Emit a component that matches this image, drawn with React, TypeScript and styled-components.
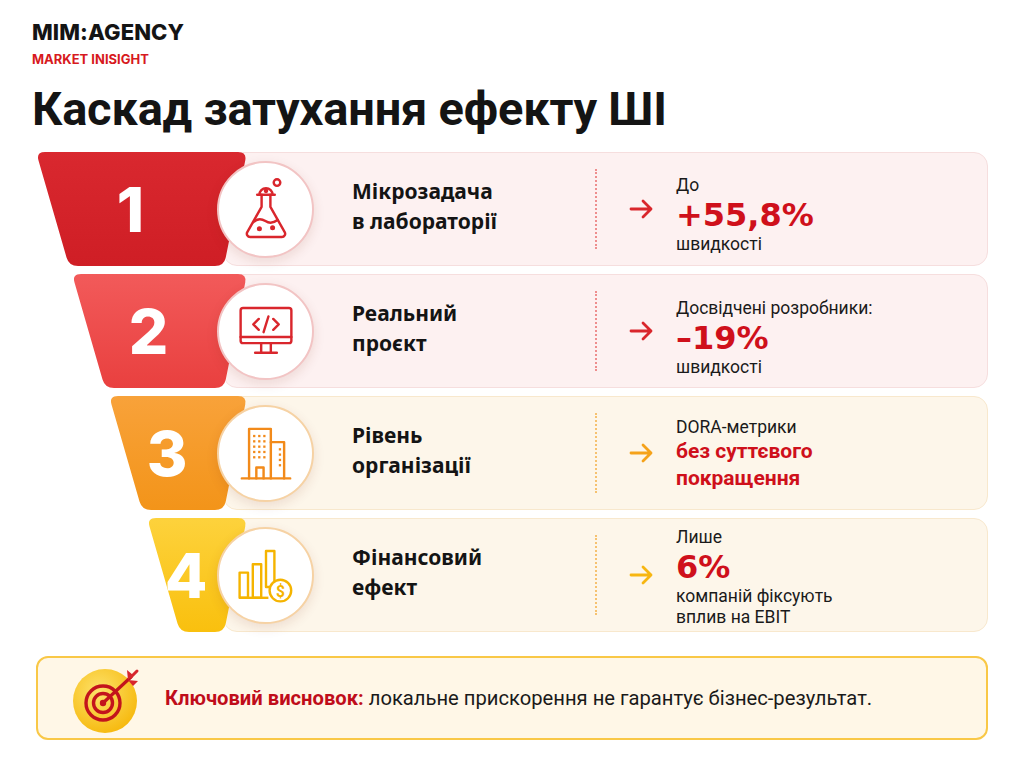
import React from "react";
import styled, { createGlobalStyle } from "styled-components";

const GlobalStyle = createGlobalStyle`
  body {
    margin: 0;
    background: #ffffff;
    font-family: "Noto Sans", "Open Sans", sans-serif;
    color: #151515;
  }
`;

const RED = "#cf101b";

type Tone = "red" | "orange";

const tones = {
  red: { card: "#fdf1f1", border: "#f6dede", ring: "#f2c4c4", dots: "#ee8e8e" },
  orange: { card: "#fdf6ea", border: "#f8e8cd", ring: "#f6d2a4", dots: "#f6c270" },
};

const Page = styled.div`
  width: 1024px;
  height: 768px;
  box-sizing: border-box;
  padding: 18px 36px 0 32px;
  display: flex;
  flex-direction: column;
`;

const Brand = styled.div`
  font-family: Inter, Roboto, sans-serif;
  font-weight: 800;
  font-size: 22px;
  line-height: 28px;
  letter-spacing: 0.1px;
  color: #141414;
`;

const Tagline = styled.div`
  font-family: Inter, Roboto, sans-serif;
  font-weight: 700;
  font-size: 13px;
  line-height: 16px;
  margin-top: 5px;
  color: #d71920;
`;

const Title = styled.h1`
  margin: 14px 0 0;
  font-family: Roboto, "Liberation Sans", sans-serif;
  font-weight: 700;
  font-size: 47px;
  line-height: 56px;
  letter-spacing: -0.2px;
  color: #141414;
`;

const Rows = styled.div`
  margin: 15px 0 0 4px;
  display: flex;
  flex-direction: column;
  gap: 8px;
`;

const Row = styled.div`
  display: grid;
  grid-template-columns: 211px 1fr;
  height: 114px;
`;

const roundedPath = (pts: [number, number][], r: number) => {
  const toward = (a: [number, number], b: [number, number]) => {
    const dx = b[0] - a[0];
    const dy = b[1] - a[1];
    const len = Math.hypot(dx, dy);
    return [a[0] + (dx / len) * r, a[1] + (dy / len) * r];
  };
  let d = "";
  pts.forEach((p, i) => {
    const prev = pts[(i + pts.length - 1) % pts.length];
    const next = pts[(i + 1) % pts.length];
    const a = toward(p, prev);
    const b = toward(p, next);
    d += `${i === 0 ? "M" : "L"}${a[0].toFixed(1)} ${a[1].toFixed(1)} Q${p[0]} ${p[1]} ${b[0].toFixed(1)} ${b[1].toFixed(1)} `;
  });
  return d + "Z";
};

const Funnel = styled.div<{ $indent: number; $bg: string }>`
  position: relative;
  z-index: 1;
  box-sizing: border-box;
  height: 114px;
  background: ${(p) => p.$bg};
  clip-path: path("${(p) =>
    roundedPath(
      [
        [p.$indent, 0],
        [211, 0],
        [188, 114],
        [p.$indent + 33, 114],
      ],
      9
    )}");
  display: flex;
  align-items: center;
  justify-content: center;
  padding: 0 38px 0 ${(p) => p.$indent + 16}px;
  color: #ffffff;
  font-family: Inter, Roboto, sans-serif;
  font-weight: 800;
  font-size: 62px;
`;

const Card = styled.div<{ $tone: Tone }>`
  margin-left: -24px;
  display: flex;
  align-items: center;
  background: ${(p) => tones[p.$tone].card};
  border: 1px solid ${(p) => tones[p.$tone].border};
  border-radius: 14px;
`;

const IconCircle = styled.div<{ $tone: Tone }>`
  position: relative;
  z-index: 2;
  margin-left: -7px;
  flex-shrink: 0;
  box-sizing: border-box;
  width: 97px;
  height: 97px;
  border-radius: 50%;
  background: #ffffff;
  border: 2px solid ${(p) => tones[p.$tone].ring};
  box-shadow: 0 4px 12px rgba(120, 40, 20, 0.12);
  display: flex;
  align-items: center;
  justify-content: center;
`;

const Stage = styled.div`
  margin: -6px 0 0 38px;
  width: 243px;
  flex-shrink: 0;
  font-weight: 700;
  font-size: 21px;
  line-height: 30px;
  color: #141414;
`;

const Divider = styled.div<{ $tone: Tone }>`
  height: 80px;
  border-left: 2px dotted ${(p) => tones[p.$tone].dots};
`;

const ArrowBox = styled.div`
  margin-left: 32px;
  display: flex;
  align-items: center;
`;

const Result = styled.div<{ $drop: number }>`
  margin: ${(p) => p.$drop}px 0 0 21px;
  display: flex;
  flex-direction: column;
  font-family: Roboto, "Liberation Sans", sans-serif;
`;

const Small = styled.div`
  font-size: 17.5px;
  line-height: 21px;
  color: #1a1a1a;
`;

const Big = styled.div`
  font-family: "DejaVu Sans", Verdana, sans-serif;
  font-weight: 700;
  font-size: 32px;
  line-height: 38px;
  color: ${RED};
`;

const Accent = styled.div`
  font-weight: 700;
  font-size: 21px;
  line-height: 27px;
  color: ${RED};
`;

const Banner = styled.div`
  margin: 24px 0 0 4px;
  height: 84px;
  box-sizing: border-box;
  border: 2px solid #f9c847;
  background: #fff7e7;
  border-radius: 12px;
  display: flex;
  align-items: center;
  padding-left: 35px;
  gap: 14px;
`;

const BannerText = styled.div`
  font-family: Roboto, "Liberation Sans", sans-serif;
  font-size: 20.2px;
  color: #1a1a1a;
  strong {
    color: #bf0d1a;
    font-weight: 700;
  }
`;

const Arrow = ({ color }: { color: string }) => (
  <svg width="26" height="24" viewBox="0 0 26 24" fill="none" stroke={color} strokeWidth="2.8" strokeLinecap="round" strokeLinejoin="round">
    <path d="M2 12h20M14 4l8 8-8 8" />
  </svg>
);

const FlaskIcon = () => (
  <svg width="54" height="66" viewBox="0 0 48 60" fill="none" stroke="#d9262c" strokeWidth="2.2" strokeLinecap="round" strokeLinejoin="round">
    <circle cx="34" cy="6" r="3" />
    <path d="M18 17a6 6 0 0 1 12 0" />
    <circle cx="24" cy="13.5" r="1" fill="#d9262c" />
    <path d="M16 17h16" />
    <path d="M20 17v11L7 51a3 3 0 0 0 2.6 4.5h28.8A3 3 0 0 0 41 51L28 28V17" />
    <path d="M12.5 42c4-4 8-3 11-1s7 2 11-1" />
    <circle cx="18" cy="48" r="1.2" fill="#d9262c" />
    <circle cx="30" cy="47" r="1.2" fill="#d9262c" />
  </svg>
);

const MonitorIcon = () => (
  <svg width="58" height="58" viewBox="0 0 48 48" fill="none" stroke="#d9262c" strokeWidth="2" strokeLinecap="round" strokeLinejoin="round">
    <rect x="3" y="5" width="42" height="29" rx="2" />
    <path d="M3 29h42" />
    <path d="M20 34v7M28 34v7M15 42h18" />
    <path d="M18 14l-4.5 4.5L18 23M30 14l4.5 4.5L30 23M26 12l-4 13" />
  </svg>
);

const BuildingIcon = () => {
  const win: React.ReactNode[] = [];
  for (let r = 0; r < 5; r++)
    for (let c = 0; c < 3; c++)
      win.push(<rect key={`a${r}${c}`} x={13.3 + c * 4.2} y={9 + r * 4.4} width="1.9" height="1.9" fill="#f28a1a" stroke="none" />);
  for (let r = 0; r < 4; r++)
    win.push(<rect key={`b${r}`} x="34.6" y={20 + r * 4.4} width="1.9" height="1.9" fill="#f28a1a" stroke="none" />);
  return (
    <svg width="58" height="58" viewBox="0 0 48 48" fill="none" stroke="#f28a1a" strokeWidth="2" strokeLinejoin="round" strokeLinecap="round">
      <path d="M10 45V4h18v41" />
      <path d="M28 15h11v30" />
      <path d="M16 45v-9h6v9" />
      <path d="M4 45h40" />
      {win}
    </svg>
  );
};

const ChartIcon = () => (
  <svg width="60" height="58" viewBox="0 0 50 48" fill="none" stroke="#f5b400" strokeWidth="2" strokeLinejoin="round">
    <rect x="3" y="22" width="7" height="21" />
    <rect x="14" y="15" width="7" height="28" />
    <rect x="25" y="4" width="7" height="30" />
    <path d="M3 43h24" />
    <circle cx="37" cy="37" r="9" fill="#ffffff" />
    <text x="37" y="42" textAnchor="middle" fontFamily="Roboto, sans-serif" fontSize="13" fontWeight="700" fill="#f5b400" stroke="none">$</text>
  </svg>
);

const TargetIcon = () => (
  <svg width="78" height="70" viewBox="0 0 78 70" fill="none">
    <defs>
      <radialGradient id="tg" cx="40%" cy="35%" r="70%">
        <stop offset="0%" stopColor="#fde26a" />
        <stop offset="100%" stopColor="#f6b80c" />
      </radialGradient>
    </defs>
    <circle cx="32" cy="38" r="32" fill="url(#tg)" />
    <g stroke="#c3141c" strokeWidth="3.4">
      <circle cx="30" cy="40" r="17" />
      <circle cx="30" cy="40" r="9.5" />
    </g>
    <circle cx="30" cy="40" r="3.2" fill="#c3141c" />
    <path d="M30 40L58 14" stroke="#c3141c" strokeWidth="3.2" strokeLinecap="round" />
    <path d="M55 17l-1-10 6 5zM55 17l10 1-5 5z" fill="#d7262d" />
    <path d="M58 14l6-6" stroke="#d7262d" strokeWidth="3" strokeLinecap="round" />
  </svg>
);

type Item = {
  n: number;
  indent: number;
  bg: string;
  tone: Tone;
  icon: React.ReactNode;
  stage: string[];
  arrow: string;
  drop: number;
  result: React.ReactNode;
};

const items: Item[] = [
  {
    n: 1,
    indent: 0,
    bg: "linear-gradient(180deg, #d9282f 0%, #cf1e25 100%)",
    tone: "red",
    icon: <FlaskIcon />,
    stage: ["Мікрозадача", "в лабораторії"],
    arrow: "#d9262c",
    drop: 12,
    result: (
      <>
        <Small>До</Small>
        <Big>+55,8%</Big>
        <Small>швидкості</Small>
      </>
    ),
  },
  {
    n: 2,
    indent: 36,
    bg: "linear-gradient(180deg, #f25a5a 0%, #e9403f 100%)",
    tone: "red",
    icon: <MonitorIcon />,
    stage: ["Реальний", "проєкт"],
    arrow: "#d9262c",
    drop: 14,
    result: (
      <>
        <Small>Досвідчені розробники:</Small>
        <Big>–19%</Big>
        <Small>швидкості</Small>
      </>
    ),
  },
  {
    n: 3,
    indent: 73,
    bg: "linear-gradient(180deg, #f8a23a 0%, #f39419 100%)",
    tone: "orange",
    icon: <BuildingIcon />,
    stage: ["Рівень", "організації"],
    arrow: "#f5a21a",
    drop: 2,
    result: (
      <>
        <Small>DORA-метрики</Small>
        <Accent>без суттєвого</Accent>
        <Accent>покращення</Accent>
      </>
    ),
  },
  {
    n: 4,
    indent: 111,
    bg: "linear-gradient(180deg, #fdd23c 0%, #f9c00e 100%)",
    tone: "orange",
    icon: <ChartIcon />,
    stage: ["Фінансовий", "ефект"],
    arrow: "#f7b611",
    drop: 4,
    result: (
      <>
        <Small>Лише</Small>
        <Big>6%</Big>
        <Small>компаній фіксують</Small>
        <Small>вплив на EBIT</Small>
      </>
    ),
  },
];

export default function App() {
  return (
    <>
      <GlobalStyle />
      <Page>
        <Brand>MIM:AGENCY</Brand>
        <Tagline>MARKET INISIGHT</Tagline>
        <Title>Каскад затухання ефекту ШІ</Title>
        <Rows>
          {items.map((it) => (
            <Row key={it.n}>
              <Funnel $indent={it.indent} $bg={it.bg}>
                {it.n}
              </Funnel>
              <Card $tone={it.tone}>
                <IconCircle $tone={it.tone}>{it.icon}</IconCircle>
                <Stage>
                  {it.stage.map((s) => (
                    <div key={s}>{s}</div>
                  ))}
                </Stage>
                <Divider $tone={it.tone} />
                <ArrowBox>
                  <Arrow color={it.arrow} />
                </ArrowBox>
                <Result $drop={it.drop}>{it.result}</Result>
              </Card>
            </Row>
          ))}
        </Rows>
        <Banner>
          <TargetIcon />
          <BannerText>
            <strong>Ключовий висновок:</strong> локальне прискорення не гарантує бізнес-результат.
          </BannerText>
        </Banner>
      </Page>
    </>
  );
}
